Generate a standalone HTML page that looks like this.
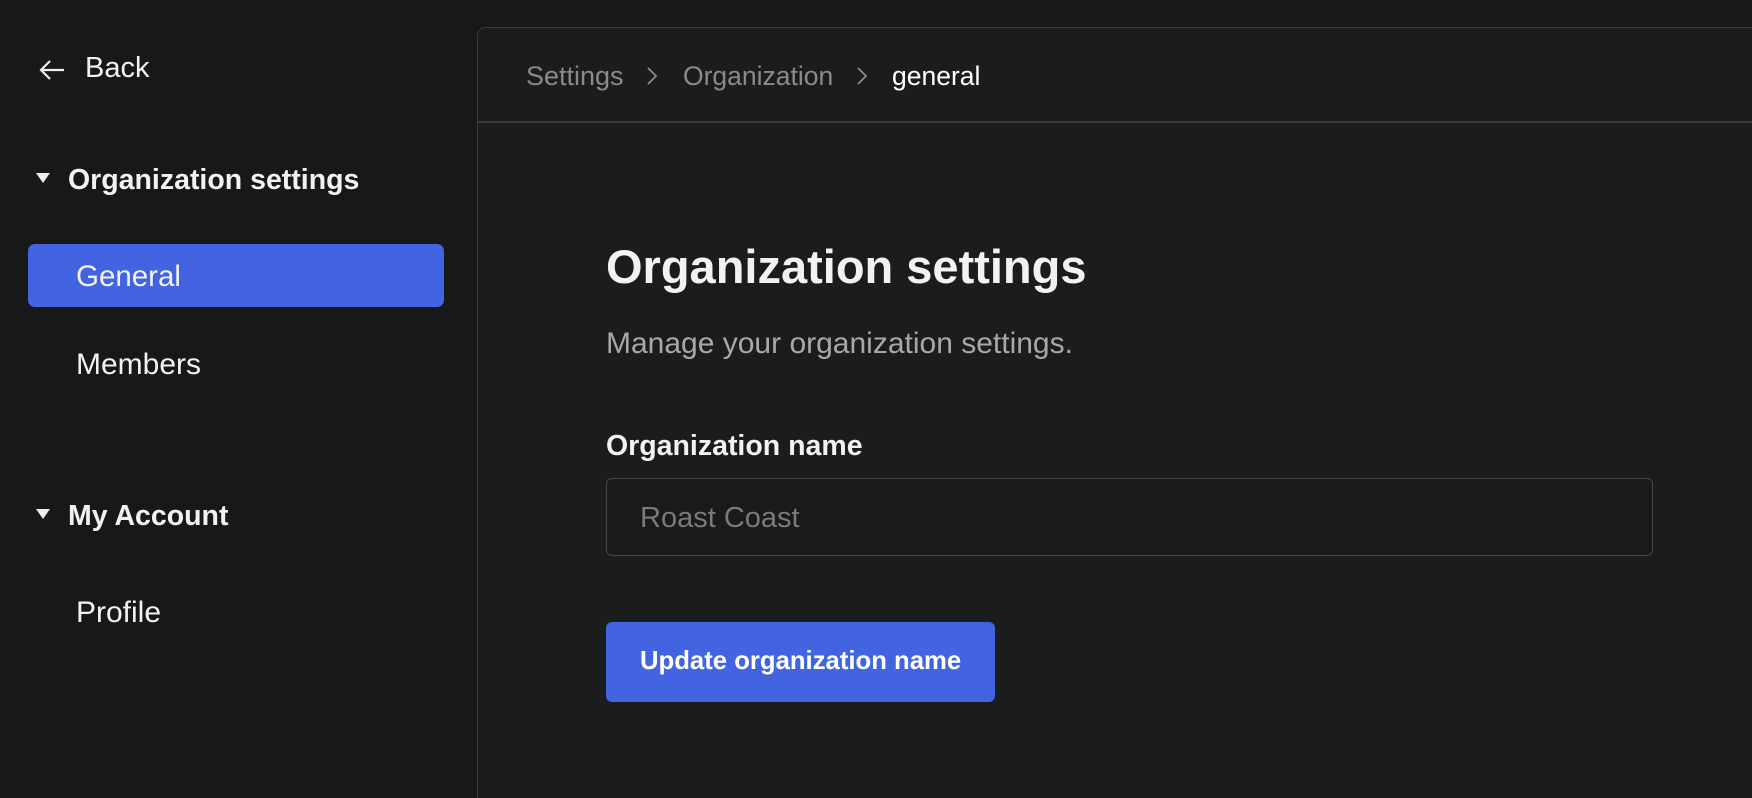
<!DOCTYPE html>
<html><head><style>
*{margin:0;padding:0;box-sizing:border-box}
html,body{width:1752px;height:798px;overflow:hidden}
body{background:#18181a;font-family:"Liberation Sans",sans-serif;color:#f2f2f2;position:relative}
.a{position:absolute;white-space:nowrap}
.panel{position:absolute;left:477px;top:27px;width:1290px;height:771px;background:#1b1c1e;border:1.5px solid #3b3b3d;border-bottom:none;border-radius:8px 0 0 0}
.tri{position:absolute;width:0;height:0;border-left:7px solid transparent;border-right:7px solid transparent;border-top:10px solid #eee}
</style></head><body>
<svg class="a" style="left:38px;top:59px" width="28" height="22" viewBox="0 0 28 22"><path d="M26 11H3M12 2L3 11l9 9" stroke="#eee" stroke-width="2.2" fill="none"/></svg>
<div class="a" style="left:85px;top:52px;font-size:29px">Back</div>
<div class="tri" style="left:36px;top:173px"></div>
<div class="a" style="left:68px;top:164px;font-size:28.5px;font-weight:600">Organization settings</div>
<div class="a" style="left:28px;top:244px;width:416px;height:63px;background:#4264e0;border-radius:7px"></div>
<div class="a" style="left:76px;top:260px;font-size:29.5px">General</div>
<div class="a" style="left:76px;top:348px;font-size:30px">Members</div>
<div class="tri" style="left:36px;top:509px"></div>
<div class="a" style="left:68px;top:500px;font-size:28.5px;font-weight:600">My Account</div>
<div class="a" style="left:76px;top:596px;font-size:30px">Profile</div>
<div class="panel"></div>
<div class="a" style="left:477px;top:121px;width:1275px;height:1.5px;background:#3b3b3d"></div>
<div class="a" style="left:526px;top:61px;font-size:27px;color:#8a8a8c">Settings</div>
<svg class="a" style="left:646px;top:66px" width="12" height="20"><path d="M2 2l8 8-8 8" stroke="#8a8a8c" stroke-width="1.8" fill="none"/></svg>
<div class="a" style="left:683px;top:61px;font-size:26.5px;color:#8a8a8c">Organization</div>
<svg class="a" style="left:856px;top:66px" width="12" height="20"><path d="M2 2l8 8-8 8" stroke="#8a8a8c" stroke-width="1.8" fill="none"/></svg>
<div class="a" style="left:892px;top:61px;font-size:26.5px;color:#fff">general</div>
<div class="a" style="left:606px;top:239px;font-size:47px;font-weight:700">Organization settings</div>
<div class="a" style="left:606px;top:327px;font-size:30px;color:#a8a8aa">Manage your organization settings.</div>
<div class="a" style="left:606px;top:430px;font-size:28.5px;font-weight:600">Organization name</div>
<div class="a" style="left:606px;top:478px;width:1047px;height:78px;border:1.5px solid #47474a;border-radius:6px;background:#1a1a1c"></div>
<div class="a" style="left:640px;top:502px;font-size:29px;color:#7a7a7c">Roast Coast</div>
<div class="a" style="left:606px;top:622px;width:389px;height:80px;background:#4264e0;border-radius:6px"></div>
<div class="a" style="left:640px;top:647px;font-size:25.7px;font-weight:700;color:#fff">Update organization name</div>
</body></html>
